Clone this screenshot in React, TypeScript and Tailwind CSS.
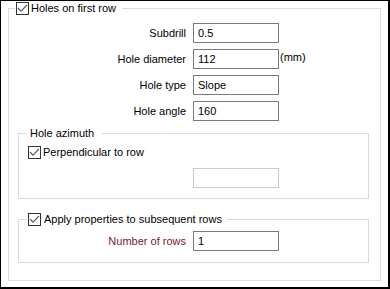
import React from "react";

const Check = () => (
  <span className="flex h-[13px] w-[13px] shrink-0 items-center justify-center border border-[#333333] bg-white">
    <svg width="11" height="11" viewBox="0 0 11 11">
      <path d="M1 5 L4 8.2 L10 2" fill="none" stroke="#5a5a5a" strokeWidth="1.1" />
    </svg>
  </span>
);

const Row = ({ label, value, suffix, labelW = 177, color = "text-black" }: { label: string; value: string; suffix?: string; labelW?: number; color?: string }) => (
  <div className="flex h-[20px] items-center">
    <div className={`text-right ${color}`} style={{ width: labelW }}>{label}</div>
    <div className="ml-[7px] flex h-[20px] w-[86px] items-center border border-[#7a7a7a] bg-white pl-[4px] text-black">{value}</div>
    {suffix && <div className="ml-[1px] -mt-[3px]">{suffix}</div>}
  </div>
);

export default function App() {
  return (
    <div className="h-[289px] w-[390px] border-b-2 border-l border-r-2 border-t border-black bg-white pl-[7px] font-['Liberation_Sans',sans-serif] text-[11px] leading-[13px] text-black">
      <fieldset className="h-[280px] w-[373px] border border-[#dcdcdc]">
        <legend className="ml-[6px] flex h-[15px] items-center gap-[2px] pl-[1px] pr-[6px]">
          <Check />
          <span>Holes on first row</span>
        </legend>
        <div className="flex flex-col gap-[6px] pt-[7px]">
          <Row label="Subdrill" value="0.5" />
          <Row label="Hole diameter" value="112" suffix="(mm)" />
          <Row label="Hole type" value="Slope" />
          <Row label="Hole angle" value="160" />
        </div>
        <fieldset className="ml-[9px] mt-[5px] h-[73px] w-[351px] border border-[#dcdcdc]">
          <legend className="ml-[8px] flex h-[15px] items-center pl-[3px] pr-[8px]">
            <span>Hole azimuth</span>
          </legend>
          <div className="ml-[9px] mt-[5px] flex h-[13px] items-center gap-[2px]">
            <Check />
            <span>Perpendicular to row</span>
          </div>
          <div className="ml-[174px] mt-[9px] h-[20px] w-[86px] border border-[#cccccc] bg-white" />
        </fieldset>
        <fieldset className="ml-[9px] mt-[13px] h-[51px] w-[351px] border border-[#dcdcdc]">
          <legend className="ml-[8px] flex h-[15px] items-center gap-[3px] pl-[1px] pr-[5px]">
            <Check />
            <span>Apply properties to subsequent rows</span>
          </legend>
          <div className="mt-[4px]">
            <Row label="Number of rows" value="1" labelW={167} color="text-[#7a1a30]" />
          </div>
        </fieldset>
      </fieldset>
    </div>
  );
}
